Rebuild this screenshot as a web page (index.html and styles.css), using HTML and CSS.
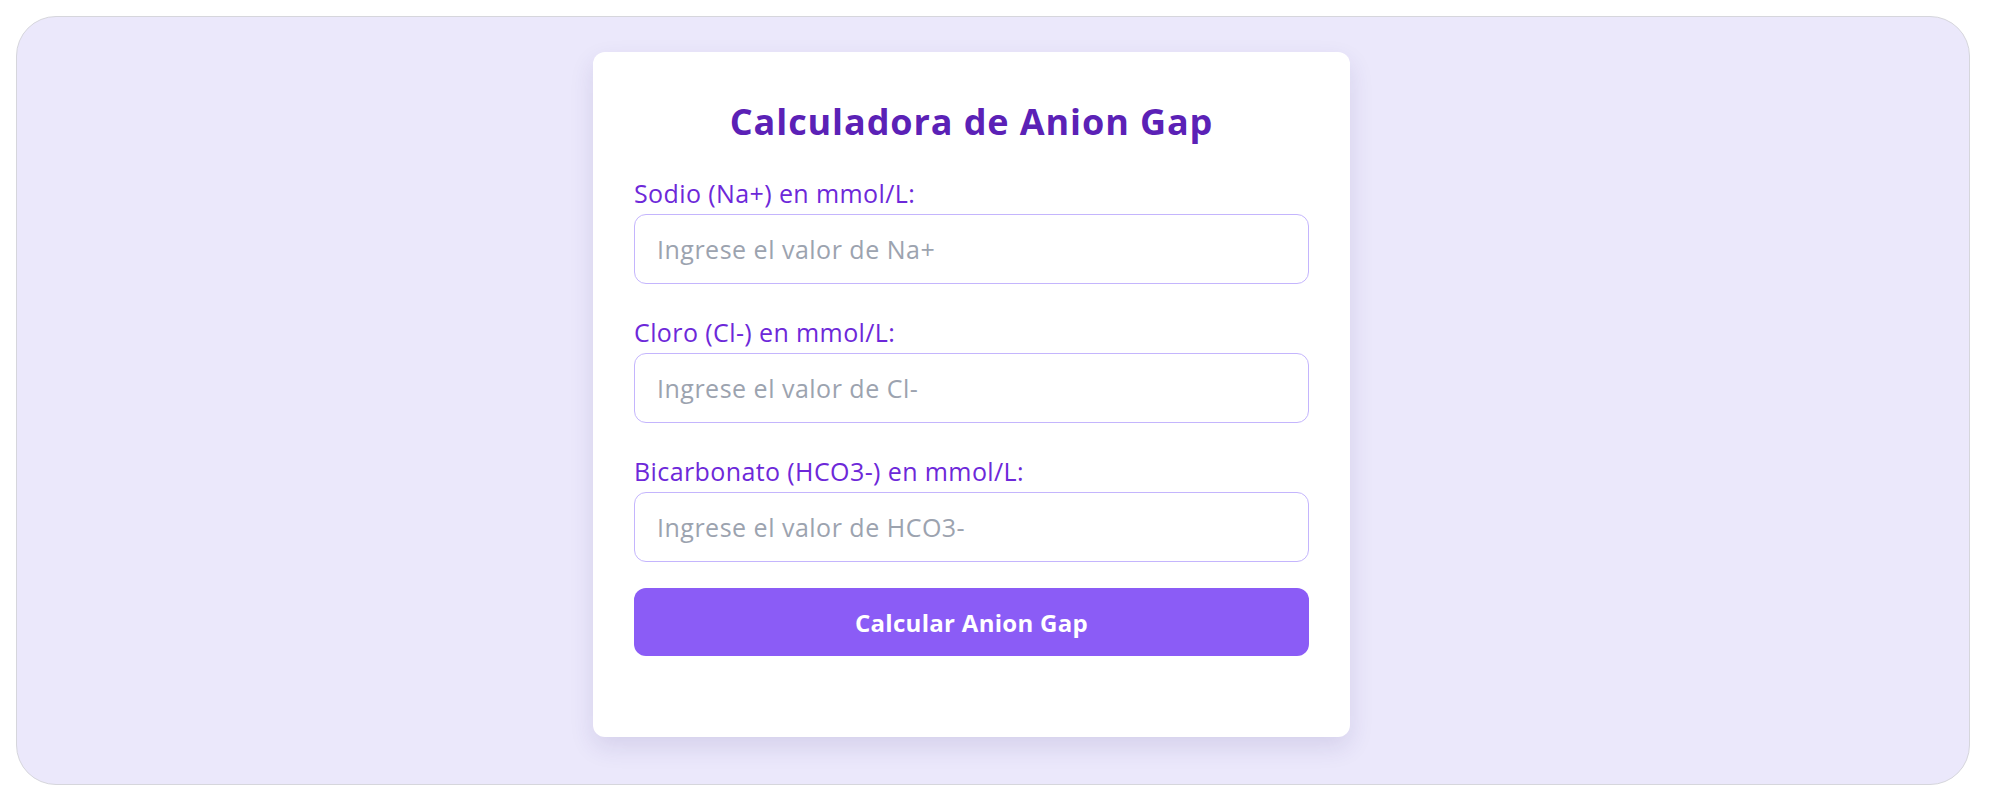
FILE: index.html
```html
<!DOCTYPE html>
<html lang="es">
<head>
    <meta charset="UTF-8">
    <meta name="viewport" content="width=device-width, initial-scale=1.0">
    <title>Calculadora de Anion Gap</title>
    <link rel="stylesheet" href="styles.css">
</head>
<body>
    <div class="frame">
        <div class="card">
            <h1>Calculadora de Anion Gap</h1>

            <!-- Valores de electrolitos -->
            <div class="field">
                <label for="sodio">Sodio (Na+) en mmol/L:</label>
                <input type="number" id="sodio" placeholder="Ingrese el valor de Na+">
            </div>
            <div class="field">
                <label for="cloro">Cloro (Cl-) en mmol/L:</label>
                <input type="number" id="cloro" placeholder="Ingrese el valor de Cl-">
            </div>
            <div class="field">
                <label for="bicarbonato">Bicarbonato (HCO3-) en mmol/L:</label>
                <input type="number" id="bicarbonato" placeholder="Ingrese el valor de HCO3-">
            </div>

            <button id="calcular">Calcular Anion Gap</button>

            <div id="resultado" class="result hidden"></div>
        </div>
    </div>

    <script>
        // Anion Gap = Na+ - (Cl- + HCO3-)
        document.getElementById('calcular').addEventListener('click', function () {
            const na = parseFloat(document.getElementById('sodio').value);
            const cl = parseFloat(document.getElementById('cloro').value);
            const hco3 = parseFloat(document.getElementById('bicarbonato').value);
            const resultado = document.getElementById('resultado');

            if (isNaN(na) || isNaN(cl) || isNaN(hco3)) {
                alert("Por favor, complete todos los campos.");
                return;
            }

            const gap = na - (cl + hco3);
            resultado.textContent = "Anion Gap: " + gap.toFixed(1) + " mmol/L";
            resultado.classList.remove('hidden');
        });
    </script>
</body>
</html>
```

FILE: styles.css
```css
html, body {
    height: 100%;
}
body {
    font-family: "Open Sans", "Noto Sans", sans-serif;
    background-color: #ffffff;
    margin: 0;
    padding: 16px 22px 19px 16px;
    box-sizing: border-box;
}
.frame {
    height: 100%;
    box-sizing: border-box;
    background-color: #ebe8fb;
    border: 1px solid #d6d6dc;
    border-radius: 40px;
    display: flex;
    justify-content: center;
    align-items: flex-start;
    padding: 35px 43px 0 0;
}
.card {
    width: 757px;
    box-sizing: border-box;
    background: white;
    padding: 47px 41px 81px;
    border-radius: 12px;
    box-shadow: 0 10px 25px rgba(60, 40, 120, 0.12);
}
h1 {
    margin: 0 0 34px;
    text-align: center;
    font-size: 36px;
    line-height: 45px;
    letter-spacing: 0.9px;
    font-weight: 700;
    color: #5b21b6;
}
.field + .field {
    margin-top: 33px;
}
label {
    display: block;
    margin-bottom: 6px;
    font-size: 25px;
    line-height: 30px;
    letter-spacing: 0.4px;
    color: #6d28d9;
}
input, button {
    display: block;
    width: 100%;
    box-sizing: border-box;
    border-radius: 12px;
    font-family: inherit;
}
input {
    height: 70px;
    padding: 0 22px;
    border: 1px solid #c4b5fd;
    font-size: 25px;
    letter-spacing: 0.5px;
    color: #333;
    outline: none;
}
input::placeholder {
    color: #9ca3af;
}
button {
    height: 68px;
    margin-top: 26px;
    border: none;
    background-color: #8b5cf6;
    color: white;
    font-size: 24px;
    letter-spacing: 0.3px;
    font-weight: 700;
    cursor: pointer;
}
button:hover {
    background-color: #7c3aed;
}
.result {
    margin-top: 20px;
    text-align: center;
    font-size: 22px;
    color: #5b21b6;
}
.hidden {
    display: none;
}
```
